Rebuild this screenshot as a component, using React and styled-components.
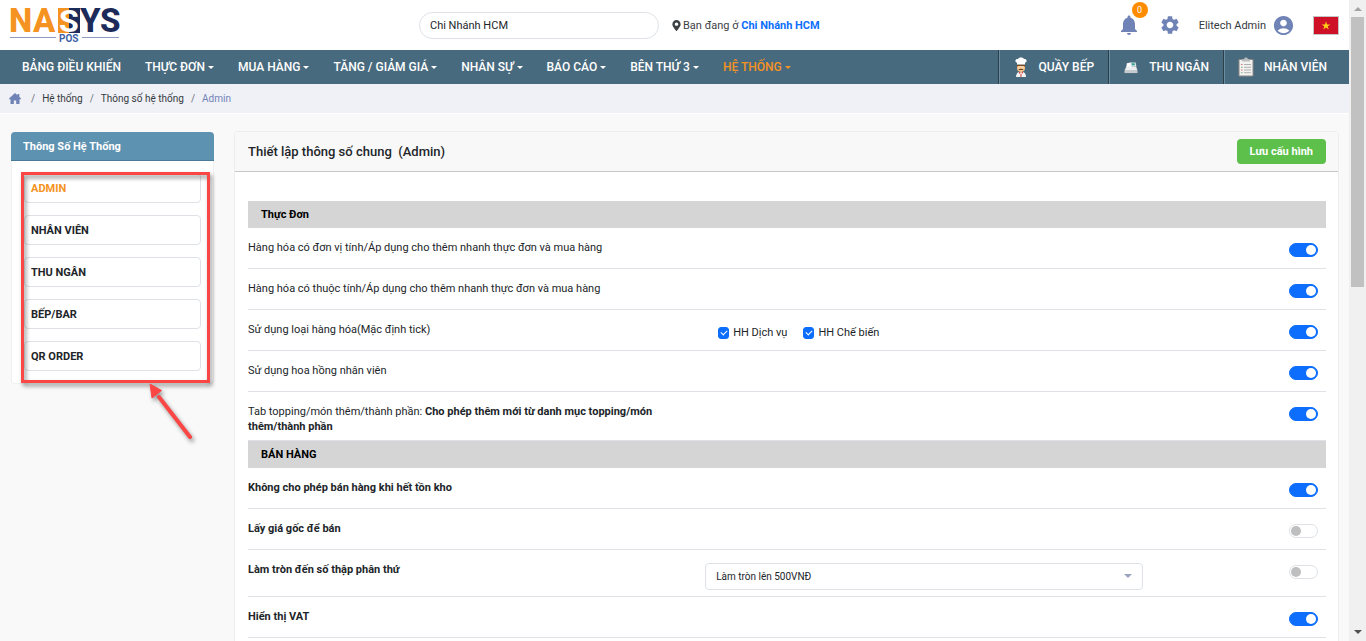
import React, { useState } from "react";
import styled, { createGlobalStyle } from "styled-components";
import { MdNotifications, MdSettings, MdAccountCircle } from "react-icons/md";
import { FaMapMarkerAlt } from "react-icons/fa";

const NAV_ITEMS = [
  "THỰC ĐƠN",
  "MUA HÀNG",
  "TĂNG / GIẢM GIÁ",
  "NHÂN SỰ",
  "BÁO CÁO",
  "BÊN THỨ 3",
  "HỆ THỐNG",
];

const TABS = ["ADMIN", "NHÂN VIÊN", "THU NGÂN", "BẾP/BAR", "QR ORDER"];

const MENU_SETTINGS = [
  { id: "unit", label: "Hàng hóa có đơn vị tính/Áp dụng cho thêm nhanh thực đơn và mua hàng", on: true },
  { id: "attribute", label: "Hàng hóa có thuộc tính/Áp dụng cho thêm nhanh thực đơn và mua hàng", on: true },
  { id: "type", label: "Sử dụng loại hàng hóa(Mặc định tick)", on: true, checks: ["HH Dịch vụ", "HH Chế biến"] },
  { id: "commission", label: "Sử dụng hoa hồng nhân viên", on: true },
  {
    id: "topping",
    label: "Tab topping/món thêm/thành phần: ",
    strong: "Cho phép thêm mới từ danh mục topping/món thêm/thành phần",
    on: true,
  },
];

const SALE_SETTINGS = [
  { id: "stock", strong: "Không cho phép bán hàng khi hết tồn kho", on: true },
  { id: "cost", strong: "Lấy giá gốc để bán", on: false },
  { id: "round", strong: "Làm tròn đến số thập phân thứ", on: false, select: "Làm tròn lên 500VNĐ" },
  { id: "vat", strong: "Hiển thị VAT", on: true },
];

function Logo() {
  return (
    <svg width="116" height="50" viewBox="-2 0 116 50" role="img" aria-label="NASYS POS">
      <path d="M48 8h11v25H48z" fill="#f59322" />
      <path d="M59 8h11v25H59z" fill="#1c2b59" />
      <g fontFamily="Roboto, sans-serif" fontWeight="800" fontSize="33">
        <text x="-1" y="32" fill="#f59322">N</text>
        <text x="23" y="32" fill="#f59322">A</text>
        <text x="70" y="32" fill="#1c2b59">Y</text>
        <text x="90" y="32" fill="#1c2b59">S</text>
      </g>
      <text x="49" y="32" fill="#fff" fontFamily="Roboto, sans-serif" fontWeight="700" fontSize="32">S</text>
      <path d="M0 37.500h46M72 37.500h37" stroke="#8f9cc0" />
      <text x="49" y="42" fill="#3f5fa6" fontFamily="Roboto, sans-serif" fontWeight="700" fontSize="10">POS</text>
    </svg>
  );
}

function HomeIcon() {
  return (
    <svg width="12" height="11" viewBox="0 0 12 11" aria-hidden="true">
      <path d="M6 0 8.500 2.200V1h1.800v2.800L12 5.400v.9h-1.500V11H7.200V7.500H4.800V11H1.500V6.300H0v-.9z" fill="currentColor" />
    </svg>
  );
}

function ChefIcon() {
  return (
    <svg width="16" height="20" viewBox="0 0 16 20" aria-hidden="true">
      <path d="M4 8h8v3.500c0 2-1.800 3.500-4 3.500s-4-1.500-4-3.500z" fill="#f3c08a" />
      <path d="M4 7.500h8v2H4z" fill="#7a4a26" />
      <path d="M5 9h6v3H5z" fill="#f7cd9b" />
      <path d="M5.500 12.300c1.500-.8 3.500-.8 5 0l-.6.800H6.100z" fill="#6b3f1f" />
      <path d="M4 7.500V5.600C2.600 5.300 2.200 4.300 2.500 3.300 2.900 2 4.200 1.700 5 2 5.700.8 6.800.4 8 .4s2.300.4 3 1.600c.8-.3 2.100 0 2.500 1.300.3 1-.1 2-1.500 2.300v1.900z" fill="#fff" />
      <path d="M3 20c0-3 1.500-4.500 3-5h4c1.500.5 3 2 3 5z" fill="#f4f4f4" />
      <path d="M6 14.500 8 16l2-1.500v2L8 16l-2 .800z" fill="#d9372c" />
      <path d="M8 17v3" stroke="#c23a30" />
    </svg>
  );
}

function RegisterIcon() {
  return (
    <svg width="14" height="13" viewBox="0 0 14 14" aria-hidden="true">
      <path d="M2.500 2.500 7 1.500l1 5H2z" fill="#fff" />
      <path d="M6 1.500h6l.8 4.500H7z" fill="#dfe5e8" />
      <path d="M7.500 2.500h3.400l.4 2H7.900z" fill="#2fa39b" />
      <path d="M2 6h10.500L14 10.500H0z" fill="#eceeef" />
      <path d="M0 10.500h14V13H0z" fill="#c6cacc" />
    </svg>
  );
}

function ClipboardIcon() {
  return (
    <svg width="16" height="20" viewBox="0 0 16 20" aria-hidden="true">
      <rect x=".5" y="2" width="15" height="17.500" rx="1.200" fill="#8b8886" />
      <path d="M1.500 3h13v15.500h-13z" fill="#f2f2f0" />
      <path d="M4 4.500V2.200h2C6.200 1 7 .4 8 .4s1.800.6 2 1.800h2v2.300z" fill="#b9bdbf" />
      <path d="M3 7.500h1.500M3 13h1.500" stroke="#d2736c" />
      <path d="M3 10.300h1.500M3 15.700h1.500" stroke="#7fae86" />
      <path d="M6 7.500h7M6 10.300h7M6 13h7M6 15.700h7" stroke="#b0b0b0" />
    </svg>
  );
}

function SettingRow({ item }) {
  const [on, setOn] = useState(item.on);

  return (
    <Row>
      <RowLabel htmlFor={item.id}>
        {item.label}
        {item.strong && <b>{item.strong}</b>}
      </RowLabel>
      <RowOptions>
        {item.checks && (
          <CheckGroup>
            {item.checks.map((name) => (
              <CheckLabel key={name}>
                <Check type="checkbox" defaultChecked />
                {name}
              </CheckLabel>
            ))}
          </CheckGroup>
        )}
        {item.select && (
          <SelectWrap>
            <RoundSelect aria-label={item.strong}>
              <option>{item.select}</option>
            </RoundSelect>
            <SelectCaret />
          </SelectWrap>
        )}
      </RowOptions>
      <Switch id={item.id} type="checkbox" checked={on} onChange={() => setOn(!on)} />
    </Row>
  );
}

function App() {
  const [tab, setTab] = useState("ADMIN");

  return (
    <Page>
      <GlobalStyle />
      <Content>
        <Header>
          <Logo />
          <BranchArea>
            <BranchSelect aria-label="Chi nhánh">
              <option>Chi Nhánh HCM</option>
            </BranchSelect>
            <BranchText>
              <FaMapMarkerAlt size={11} />
              <span>
                Bạn đang ở <a href="#branch">Chi Nhánh HCM</a>
              </span>
            </BranchText>
          </BranchArea>
          <UserArea>
            <IconButton aria-label="Thông báo">
              <MdNotifications size={24} />
              <Badge>0</Badge>
            </IconButton>
            <IconButton aria-label="Cài đặt">
              <MdSettings size={22} />
            </IconButton>
            <UserButton>
              Elitech Admin
              <MdAccountCircle size={23} />
            </UserButton>
            <FlagButton aria-label="Tiếng Việt">
              <svg width="24" height="17" viewBox="0 0 24 17">
                <path d="M0 0h24v17H0z" fill="#ce1126" />
                <path d="M12 4.200 13 7.400h3.400l-2.700 1.900 1 3.200-2.700-2-2.700 2 1-3.200-2.700-1.900H11z" fill="#fcd116" />
              </svg>
            </FlagButton>
          </UserArea>
        </Header>

        <Nav>
          <NavLink href="#dashboard">BẢNG ĐIỀU KHIỂN</NavLink>
          {NAV_ITEMS.map((name) => (
            <NavButton key={name} $active={name === "HỆ THỐNG"}>
              {name}
              <Caret />
            </NavButton>
          ))}
          <Shortcuts>
            <Shortcut href="#kitchen"><ChefIcon />QUẦY BẾP</Shortcut>
            <Shortcut href="#cashier"><RegisterIcon />THU NGÂN</Shortcut>
            <Shortcut href="#staff"><ClipboardIcon />NHÂN VIÊN</Shortcut>
          </Shortcuts>
        </Nav>

        <Breadcrumb aria-label="breadcrumb">
          <CrumbHome href="#home" aria-label="Trang chủ"><HomeIcon /></CrumbHome>
          <span>/</span>
          <Crumb href="#system">Hệ thống</Crumb>
          <span>/</span>
          <Crumb href="#params">Thông số hệ thống</Crumb>
          <span>/</span>
          <Crumb href="#admin" $active>Admin</Crumb>
        </Breadcrumb>

        <Body>
          <Sidebar>
            <SidebarTitle>Thông Số Hệ Thống</SidebarTitle>
            <TabList>
              {TABS.map((name) => (
                <Tab key={name} $active={tab === name} onClick={() => setTab(name)}>
                  {name}
                </Tab>
              ))}
            </TabList>
            <Highlight />
            <Arrow width="60" height="70" viewBox="0 0 60 70" aria-hidden="true">
              <path d="M46 57 15 17" stroke="#fb4646" strokeWidth="4" strokeLinecap="round" />
              <path d="M6 4 17.500 10.500 8 18z" fill="#fb4646" stroke="#fb4646" />
            </Arrow>
          </Sidebar>

          <Panel>
            <PanelHeader>
              <PanelTitle>Thiết lập thông số chung&nbsp; (Admin)</PanelTitle>
              <SaveButton>Lưu cấu hình</SaveButton>
            </PanelHeader>
            <PanelBody>
              <SectionTitle>Thực Đơn</SectionTitle>
              {MENU_SETTINGS.map((item) => (
                <SettingRow key={item.id} item={item} />
              ))}
              <SectionTitle>BÁN HÀNG</SectionTitle>
              {SALE_SETTINGS.map((item) => (
                <SettingRow key={item.id} item={item} />
              ))}
            </PanelBody>
          </Panel>
        </Body>
      </Content>

      <ScrollTrack aria-hidden="true">
        <ScrollArrow $color="#a3a3a3" />
        <ScrollRail>
          <ScrollThumb />
        </ScrollRail>
        <ScrollArrow $color="#505050" $down />
      </ScrollTrack>
    </Page>
  );
}

const GlobalStyle = createGlobalStyle`
  * {
    box-sizing: border-box;
  }

  body {
    margin: 0;
    overflow: hidden;
    background: #f9f9f9;
    color: #212529;
    font-family: Roboto, sans-serif;
    font-size: 11px;
    line-height: 15px;
  }

  button, input, select {
    font-family: inherit;
  }

  button {
    cursor: pointer;
  }

  a {
    text-decoration: none;
  }
`;

const Page = styled.div`
  display: flex;
  height: 100vh;
`;

const Content = styled.div`
  display: flex;
  flex-direction: column;
  flex: 1;
  min-width: 0;
  overflow: hidden;
`;

const Header = styled.header`
  display: grid;
  grid-template-columns: 411px 1fr auto;
  align-items: center;
  flex-shrink: 0;
  height: 50px;
  padding: 0 10px 0 8px;
  background: #fff;
`;

const BranchArea = styled.div`
  display: flex;
  align-items: center;
  gap: 12px;
`;

const BranchSelect = styled.select`
  appearance: none;
  width: 240px;
  height: 27px;
  padding: 0 10px;
  border: 1px solid #dee2e6;
  border-radius: 14px;
  background: #fff;
  color: #212529;
  font-size: 11px;
`;

const BranchText = styled.div`
  display: flex;
  align-items: center;
  gap: 1px;
  color: #3c4146;

  a {
    color: #0d6efd;
    font-weight: 700;
  }
`;

const UserArea = styled.div`
  display: flex;
  align-items: center;
  gap: 18px;
`;

const IconButton = styled.button`
  display: flex;
  position: relative;
  padding: 0;
  border: none;
  background: none;
  color: #7083b7;
`;

const Badge = styled.span`
  position: absolute;
  top: -11px;
  right: -7px;
  width: 16px;
  height: 16px;
  border-radius: 50%;
  background: #ff8c00;
  color: #fff;
  font-size: 9px;
  line-height: 16px;
  text-align: center;
`;

const UserButton = styled.button`
  display: flex;
  align-items: center;
  gap: 6px;
  padding: 0;
  border: none;
  background: none;
  color: #343a40;
  font-size: 11px;

  svg {
    color: #7083b7;
  }
`;

const FlagButton = styled.button`
  display: flex;
  padding: 0;
  border: 1px solid #c4c4c4;
  background: none;
`;

const Nav = styled.nav`
  display: flex;
  flex-shrink: 0;
  height: 34px;
  padding-left: 10px;
  background: #486a7e;
`;

const NavLink = styled.a`
  display: flex;
  align-items: center;
  padding: 0 12px;
  color: #fff;
  font-size: 12px;
  font-weight: 500;
  white-space: nowrap;
`;

const NavButton = styled.button`
  display: flex;
  align-items: center;
  gap: 3px;
  padding: 0 12px;
  border: none;
  background: none;
  color: ${({ $active }) => ($active ? "#f59322" : "#fff")};
  font-size: 12px;
  font-weight: 500;
  white-space: nowrap;
`;

const Caret = styled.span`
  border-top: 3px solid currentColor;
  border-left: 3px solid transparent;
  border-right: 3px solid transparent;
`;

const Shortcuts = styled.div`
  display: flex;
  margin-left: auto;
  padding-right: 8px;
`;

const Shortcut = styled(NavLink)`
  padding-right: 14px;
  border-left: 1px solid #2c3e4a;
  box-shadow: inset 1px 0 0 #6b8ea3;

  svg {
    width: 20px;
    margin-right: 8px;
  }
`;

const Breadcrumb = styled.nav`
  display: flex;
  align-items: center;
  flex-shrink: 0;
  gap: 7px;
  height: 30px;
  padding: 0 9px;
  border-bottom: 1px solid #fff;
  background: #f0f1f6;
  color: #6c757d;
  font-size: 10px;
`;

const Crumb = styled.a`
  color: ${({ $active }) => ($active ? "#7083b7" : "#343a40")};
`;

const CrumbHome = styled.a`
  display: flex;
  margin-right: 3px;
  color: #7083b7;
`;

const Body = styled.div`
  display: flex;
  align-items: flex-start;
  flex: 1;
  gap: 20px;
  min-height: 0;
  padding: 17px 10px 0 11px;
`;

const Sidebar = styled.aside`
  position: relative;
  width: 203px;
  flex-shrink: 0;
  margin-top: 1px;
  border: 1px solid #f0f0f0;
  border-top: none;
  border-radius: 4px;
  background: #fff;
`;

const SidebarTitle = styled.h2`
  margin: 0 -1px;
  padding: 7px 12px 6px;
  border-bottom: 1px solid #4a7a97;
  border-radius: 4px 4px 0 0;
  background: #5e92b1;
  color: #fff;
  font-size: 11px;
  font-weight: 700;
`;

const TabList = styled.div`
  display: flex;
  flex-direction: column;
  gap: 12px;
  padding: 12px;
`;

const Tab = styled.button`
  height: 30px;
  padding: 0 6px;
  border: 1px solid #dee2e6;
  border-radius: 4px;
  background: #fff;
  color: ${({ $active }) => ($active ? "#f59322" : "#212529")};
  font-size: 11px;
  font-weight: 700;
  text-align: left;
`;

const Highlight = styled.div`
  position: absolute;
  top: 40px;
  left: 9px;
  right: 3px;
  bottom: 0;
  border: 3px solid #fb4646;
  filter: drop-shadow(2px 3px 2px rgba(0, 0, 0, 0.45));
  pointer-events: none;
`;

const Arrow = styled.svg`
  position: absolute;
  top: 248px;
  left: 132px;
  filter: drop-shadow(2px 3px 2px rgba(0, 0, 0, 0.4));
  pointer-events: none;
`;

const Panel = styled.main`
  flex: 1;
  align-self: stretch;
  min-width: 0;
  border: 1px solid #ededed;
  border-bottom: none;
  border-radius: 4px 4px 0 0;
  background: #fff;
`;

const PanelHeader = styled.div`
  display: flex;
  align-items: center;
  justify-content: space-between;
  height: 40px;
  padding: 0 12px 0 13px;
  border-bottom: 1px solid #c8c8c8;
  background: #f8f8f8;
`;

const PanelTitle = styled.h1`
  margin: 0;
  font-size: 13px;
  font-weight: 500;
`;

const SaveButton = styled.button`
  height: 25px;
  padding: 0 13px;
  border: none;
  border-radius: 4px;
  background: #5cc04a;
  color: #fff;
  font-size: 11px;
  font-weight: 700;
`;

const PanelBody = styled.div`
  padding: 29px 12px 0 13px;
`;

const SectionTitle = styled.h3`
  margin: 0;
  padding: 6px 13px;
  background: #d5d5d5;
  color: #000;
  font-size: 11px;
  font-weight: 700;
`;

const Row = styled.div`
  display: grid;
  grid-template-columns: 5fr 5fr 2fr;
  align-items: start;
  min-height: 41px;
  border-bottom: 1px solid #dee2e6;
`;

const RowLabel = styled.label`
  padding: 12px 8px 6px 0;
`;

const RowOptions = styled.div`
  padding: 0 3px 0 8px;
`;

const CheckGroup = styled.div`
  display: flex;
  gap: 16px;
  padding: 15px 13px 0;
`;

const CheckLabel = styled.label`
  display: flex;
  align-items: center;
  gap: 4px;
`;

const Check = styled.input`
  appearance: none;
  display: grid;
  place-items: center;
  width: 11px;
  height: 12px;
  margin: 0;
  border: 1px solid #0d6efd;
  border-radius: 3px;
  background: #fff;

  &:checked {
    background: #0d6efd;
  }

  &:checked::before {
    content: "";
    width: 5px;
    height: 3px;
    margin-bottom: 1px;
    border-left: 1px solid #fff;
    border-bottom: 1px solid #fff;
    transform: rotate(-45deg);
  }
`;

const SelectWrap = styled.div`
  position: relative;
  padding: 13px 0 6px;
`;

const RoundSelect = styled.select`
  display: block;
  appearance: none;
  width: 100%;
  height: 27px;
  padding: 0 10px;
  border: 1px solid #dee2e6;
  border-radius: 4px;
  background: #fff;
  color: #212529;
  font-size: 10px;
`;

const SelectCaret = styled.span`
  position: absolute;
  top: 24px;
  right: 11px;
  border-top: 4px solid #9aa3c0;
  border-left: 4px solid transparent;
  border-right: 4px solid transparent;
  pointer-events: none;
`;

const Switch = styled.input`
  appearance: none;
  display: flex;
  align-items: center;
  justify-self: end;
  width: 29px;
  height: 14px;
  margin: 15px 8px 0 0;
  padding: 0 1px;
  border: 1px solid #dee2e6;
  border-radius: 7px;
  background: #fff;
  cursor: pointer;

  &::before {
    content: "";
    width: 10px;
    height: 10px;
    border-radius: 50%;
    background: #bfbfbf;
  }

  &:checked {
    justify-content: flex-end;
    border-color: #0d6efd;
    background: #0d6efd;
  }

  &:checked::before {
    background: #fff;
  }
`;

const ScrollTrack = styled.div`
  display: flex;
  flex-direction: column;
  align-items: center;
  width: 17px;
  flex-shrink: 0;
  padding: 7px 0;
  background: #f0f0f0;
`;

const ScrollArrow = styled.span`
  border-left: 4px solid transparent;
  border-right: 4px solid transparent;
  border-${({ $down }) => ($down ? "top" : "bottom")}: 4px solid ${({ $color }) => $color};
`;

const ScrollRail = styled.div`
  flex: 1;
  width: 13px;
  padding: 6px 0;
`;

const ScrollThumb = styled.div`
  height: calc(400% / 9);
  background: #c1c1c1;
`;

export default App;
